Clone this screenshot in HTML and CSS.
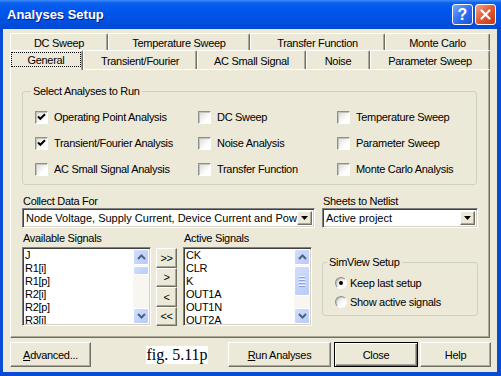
FILE: index.html
```html
<!DOCTYPE html>
<html lang="en">
<head>
  <meta charset="UTF-8">
  <meta name="viewport" content="width=device-width, initial-scale=1.0">
  <title>Analyses Setup</title>
  <link rel="stylesheet" href="styles.css">
</head>
<body>
  <div class="window">
    <div class="titlebar">
      <span class="title">Analyses Setup</span>
      <div class="caption-buttons">
        <span class="cap-btn help">?</span>
        <span class="cap-btn close">
          <svg width="13" height="13" viewBox="0 0 13 13"><path d="M2.5 2.5 L10.5 10.5 M10.5 2.5 L2.5 10.5" stroke="#fff" stroke-width="2.2" stroke-linecap="round"/></svg>
        </span>
      </div>
    </div>

    <div class="frame">
      <!-- Tab strip: two rows, the front row holds the selected tab -->
      <div class="tabs">
        <div class="tab-row back">
          <div class="tab t-dc">DC Sweep</div>
          <div class="tab t-temp">Temperature Sweep</div>
          <div class="tab t-transfer">Transfer Function</div>
          <div class="tab t-monte">Monte Carlo</div>
        </div>
        <div class="tab-row front">
          <div class="tab t-general active"><span class="focus">General</span></div>
          <div class="tab t-transient">Transient/Fourier</div>
          <div class="tab t-ac">AC Small Signal</div>
          <div class="tab t-noise">Noise</div>
          <div class="tab t-param">Parameter Sweep</div>
        </div>
      </div>

      <div class="page">
        <div class="group analyses">
          <div class="group-title">Select Analyses to Run</div>
          <div class="check-grid">
            <label class="option"><span class="check on"><svg width="9" height="8" viewBox="0 0 9 8"><path d="M1 3.5 L3.3 5.8 L8 1.2" fill="none" stroke="#000" stroke-width="2"/></svg></span>Operating Point Analysis</label>
            <label class="option"><span class="check"></span>DC Sweep</label>
            <label class="option"><span class="check"></span>Temperature Sweep</label>
            <label class="option"><span class="check on"><svg width="9" height="8" viewBox="0 0 9 8"><path d="M1 3.5 L3.3 5.8 L8 1.2" fill="none" stroke="#000" stroke-width="2"/></svg></span>Transient/Fourier Analysis</label>
            <label class="option"><span class="check"></span>Noise Analysis</label>
            <label class="option"><span class="check"></span>Parameter Sweep</label>
            <label class="option"><span class="check"></span>AC Small Signal Analysis</label>
            <label class="option"><span class="check"></span>Transfer Function</label>
            <label class="option"><span class="check"></span>Monte Carlo Analysis</label>
          </div>
        </div>

        <div class="data-row">
          <div class="field collect">
            <div class="field-label">Collect Data For</div>
            <div class="select">
              <span class="select-value">Node Voltage, Supply Current, Device Current and Power</span>
              <span class="select-arrow"><svg width="7" height="4" viewBox="0 0 7 4"><path d="M0 0 H7 L3.5 4 Z" fill="#000"/></svg></span>
            </div>
          </div>
          <div class="field sheets">
            <div class="field-label">Sheets to Netlist</div>
            <div class="select">
              <span class="select-value">Active project</span>
              <span class="select-arrow"><svg width="7" height="4" viewBox="0 0 7 4"><path d="M0 0 H7 L3.5 4 Z" fill="#000"/></svg></span>
            </div>
          </div>
        </div>

        <div class="signals">
          <div class="list-col">
            <div class="field-label">Available Signals</div>
            <div class="list">
              <div class="list-items">
                <div>J</div>
                <div>R1[i]</div>
                <div>R1[p]</div>
                <div>R2[i]</div>
                <div>R2[p]</div>
                <div>R3[i]</div>
              </div>
              <div class="vscroll">
                <span class="sb-btn"><svg width="9" height="6" viewBox="0 0 9 6"><path d="M1 5 L4.5 1.5 L8 5" fill="none" stroke="#4d6185" stroke-width="2"/></svg></span>
                <div class="sb-track"><span class="sb-thumb short"></span></div>
                <span class="sb-btn"><svg width="9" height="6" viewBox="0 0 9 6"><path d="M1 1 L4.5 4.5 L8 1" fill="none" stroke="#4d6185" stroke-width="2"/></svg></span>
              </div>
            </div>
          </div>

          <div class="movers">
            <button class="btn mover">&gt;&gt;</button>
            <button class="btn mover">&gt;</button>
            <button class="btn mover">&lt;</button>
            <button class="btn mover">&lt;&lt;</button>
          </div>

          <div class="list-col">
            <div class="field-label">Active Signals</div>
            <div class="list">
              <div class="list-items">
                <div>CK</div>
                <div>CLR</div>
                <div>K</div>
                <div>OUT1A</div>
                <div>OUT1N</div>
                <div>OUT2A</div>
              </div>
              <div class="vscroll">
                <span class="sb-btn"><svg width="9" height="6" viewBox="0 0 9 6"><path d="M1 5 L4.5 1.5 L8 5" fill="none" stroke="#4d6185" stroke-width="2"/></svg></span>
                <div class="sb-track"><span class="sb-thumb long"><i></i><i></i><i></i><i></i></span></div>
                <span class="sb-btn"><svg width="9" height="6" viewBox="0 0 9 6"><path d="M1 1 L4.5 4.5 L8 1" fill="none" stroke="#4d6185" stroke-width="2"/></svg></span>
              </div>
            </div>
          </div>

          <div class="group simview">
            <div class="group-title">SimView Setup</div>
            <div class="radio-list">
              <label class="option"><span class="radio on"></span>Keep last setup</label>
              <label class="option"><span class="radio"></span>Show active signals</label>
            </div>
          </div>
        </div>
      </div>

      <div class="footer">
        <button class="btn b-advanced"><u>A</u>dvanced...</button>
        <span class="fig">fig. 5.11p</span>
        <button class="btn b-run"><u>R</u>un Analyses</button>
        <button class="btn b-close default">Close</button>
        <button class="btn b-help">Help</button>
      </div>
    </div>
  </div>
</body>
</html>
```

FILE: styles.css
```css
body {
  margin: 0;
  font-family: "Liberation Sans", Arial, sans-serif;
  font-size: 11px;
  letter-spacing: -0.3px;
  color: #000;
  background: #fff;
}

.window {
  width: 501px;
  height: 376px;
  display: flex;
  flex-direction: column;
  background: #0a4bd6;
}

/* title bar */
.titlebar {
  height: 29px;
  flex: none;
  display: flex;
  align-items: center;
  padding: 0 5px 0 7px;
  background: linear-gradient(#3d8bfd 0, #0a5fea 3px, #0058ee 9px, #0054e6 55%, #0049d4 100%);
}

.title {
  flex: 1;
  color: #fff;
  font-weight: bold;
  font-size: 13px;
  letter-spacing: 0;
  text-shadow: 1px 1px #0a1e8c;
}

.caption-buttons {
  display: flex;
  gap: 2px;
}

.cap-btn {
  width: 21px;
  height: 21px;
  box-sizing: border-box;
  border: 1px solid #fff;
  border-radius: 3px;
  display: flex;
  align-items: center;
  justify-content: center;
}

.help {
  background: linear-gradient(135deg, #7aa8ff, #2c6cf0 55%, #1c52d8);
  color: #fff;
  font-weight: bold;
  font-size: 16px;
  letter-spacing: 0;
}

.close {
  background: linear-gradient(135deg, #f4a48a, #e2582f 50%, #c23a12);
}

/* dialog body */
.frame {
  flex: 1;
  display: flex;
  flex-direction: column;
  margin: 0 4px 4px 3px;
  padding: 4px 7px 5px 7px;
  background: #ece9d8;
}

.tabs {
  display: flex;
  flex-direction: column;
}

.tab-row {
  display: flex;
}

.tab-row.back {
  height: 17px;
}

.tab-row.front {
  height: 19px;
}

.tab {
  flex: none;
  box-sizing: border-box;
  display: flex;
  align-items: center;
  justify-content: center;
  border-top: 1px solid #fff;
  border-left: 1px solid #fff;
  border-right: 1px solid #716f64;
  box-shadow: inset -1px 0 #aca899;
  border-radius: 2px 2px 0 0;
  white-space: nowrap;
  padding-top: 1px;
}

.t-dc { width: 98px; }
.t-temp { width: 142px; }
.t-transfer { width: 135px; }
.t-monte { width: 105px; }
.t-general { width: 73px; }
.t-transient { width: 114px; }
.t-ac { width: 109px; }
.t-noise { width: 64px; }
.t-param { width: 120px; }

.tab.active {
  position: relative;
  z-index: 1;
  height: 20px;
  background: #ece9d8;
  padding: 1px 1px 1px 0;
}

.focus {
  flex: 1;
  align-self: stretch;
  display: flex;
  align-items: center;
  justify-content: center;
  border: 1px dotted #000;
  margin: 0 0 2px 0;
}

.page {
  height: 269px;
  box-sizing: border-box;
  border: 1px solid;
  border-color: #fff #716f64 #716f64 #fff;
  box-shadow: inset -1px -1px #aca899;
  padding: 21px 11px 0 11px;
}

/* group boxes */
.group {
  box-sizing: border-box;
  border: 1px solid #d0d0bf;
  border-radius: 3px;
}

.group-title {
  width: fit-content;
  margin: -7px 0 0 8px;
  padding: 0 2px;
  line-height: 13px;
  background: #ece9d8;
}

.analyses {
  height: 94px;
  margin-right: 1px;
}

.check-grid {
  display: grid;
  grid-template-columns: 163px 139px 1fr;
  grid-auto-rows: 26px;
  padding: 6px 0 0 12px;
}

.option {
  display: flex;
  align-items: center;
  gap: 6px;
  white-space: nowrap;
}

.check {
  width: 13px;
  height: 13px;
  box-sizing: border-box;
  flex: none;
  display: flex;
  align-items: center;
  justify-content: center;
  border: 1px solid;
  border-color: #8e8f8f #fff #fff #8e8f8f;
  box-shadow: inset 1px 1px #c4c3bb;
  background: linear-gradient(135deg, #dcdbd4, #fff 70%);
}

.radio {
  width: 12px;
  height: 12px;
  box-sizing: border-box;
  flex: none;
  display: flex;
  align-items: center;
  justify-content: center;
  border-radius: 50%;
  border: 1px solid;
  border-color: #8e8f8f #fff #fff #8e8f8f;
  box-shadow: inset 1px 1px #c4c3bb;
  background: linear-gradient(135deg, #dcdbd4, #fff 70%);
}

.radio.on::after {
  content: "";
  width: 4px;
  height: 4px;
  border-radius: 50%;
  background: #000;
}

/* drop downs */
.data-row {
  display: flex;
  gap: 7px;
  margin-top: 10px;
}

.field {
  display: flex;
  flex-direction: column;
}

.field-label {
  line-height: 13px;
  padding-left: 1px;
}

.collect { width: 293px; }
.sheets { width: 156px; }

.select {
  height: 20px;
  box-sizing: border-box;
  display: flex;
  background: #fff;
  border: 1px solid;
  border-color: #808080 #fff #fff #808080;
  box-shadow: inset 1px 1px #404040, inset -1px -1px #d4d0c8;
  padding: 2px 2px 2px 3px;
}

.select-value {
  flex: 1;
  line-height: 14px;
  letter-spacing: 0;
  white-space: nowrap;
  overflow: hidden;
}

.select-arrow {
  width: 15px;
  flex: none;
  box-sizing: border-box;
  display: flex;
  align-items: center;
  justify-content: center;
  background: #ece9d8;
  border: 1px solid;
  border-color: #fff #716f64 #716f64 #fff;
  box-shadow: inset -1px -1px #aca899;
}

/* signal lists */
.signals {
  display: flex;
  margin-top: 4px;
}

.list-col {
  width: 129px;
  display: flex;
  flex-direction: column;
}

.list {
  height: 79px;
  margin-top: 2px;
  box-sizing: border-box;
  display: flex;
  overflow: hidden;
  background: #fff;
  border: 1px solid;
  border-color: #808080 #fff #fff #808080;
  box-shadow: inset 1px 1px #404040, inset -1px -1px #d4d0c8;
  padding: 1px;
}

.list-items {
  flex: 1;
  padding-left: 1px;
  line-height: 13px;
  overflow: hidden;
}

.vscroll {
  width: 16px;
  display: flex;
  flex-direction: column;
  background: #f7f6f1;
}

.sb-btn,
.sb-thumb {
  box-sizing: border-box;
  border: 1px solid #fff;
  border-radius: 2px;
  background: linear-gradient(135deg, #d2defc, #b8cbf7);
  display: flex;
  align-items: center;
  justify-content: center;
}

.sb-btn {
  height: 16px;
  flex: none;
}

.sb-track {
  flex: 1;
  display: flex;
  flex-direction: column;
}

.sb-thumb {
  margin-top: 1px;
  flex-direction: column;
  gap: 1px;
}

.sb-thumb.short { height: 9px; }
.sb-thumb.long { height: 30px; }

.sb-thumb i {
  width: 6px;
  height: 1px;
  background: #eef3fe;
  border-bottom: 1px solid #8ca4d8;
}

.movers {
  width: 21px;
  height: 78px;
  margin: 16px 6px 0 5px;
  display: grid;
  grid-template-rows: repeat(4, 1fr);
}

.simview {
  width: 156px;
  height: 54px;
  margin: 30px 0 0 10px;
}

.simview .group-title {
  margin-left: 4px;
}

.radio-list {
  display: grid;
  grid-auto-rows: 19px;
  padding: 4px 0 0 12px;
}

.radio-list .option {
  gap: 3px;
}

/* buttons */
.btn {
  box-sizing: border-box;
  padding: 0;
  margin: 0;
  font: inherit;
  letter-spacing: inherit;
  color: #000;
  background: #ece9d8;
  border: 1px solid;
  border-color: #fff #716f64 #716f64 #fff;
  box-shadow: inset -1px -1px #aca899;
  display: flex;
  align-items: center;
  justify-content: center;
}

.footer {
  display: flex;
  align-items: center;
  height: 25px;
  margin-top: 4px;
}

.footer .btn {
  flex: none;
  height: 25px;
}

.b-advanced { width: 81px; }
.b-run { width: 103px; margin-left: 20px; }
.b-close { width: 84px; margin-left: 3px; }
.b-help { width: 71px; margin-left: 2px; }

.btn.default {
  border-color: #000;
  box-shadow: inset 1px 1px #fff, inset -1px -1px #716f64, inset -2px -2px #aca899;
}

.fig {
  flex: none;
  width: 62px;
  height: 18px;
  margin-left: 55px;
  background: #fff;
  font-family: "Liberation Serif", "Times New Roman", serif;
  font-size: 16px;
  letter-spacing: 0;
  line-height: 18px;
  text-align: center;
  white-space: nowrap;
}
```
